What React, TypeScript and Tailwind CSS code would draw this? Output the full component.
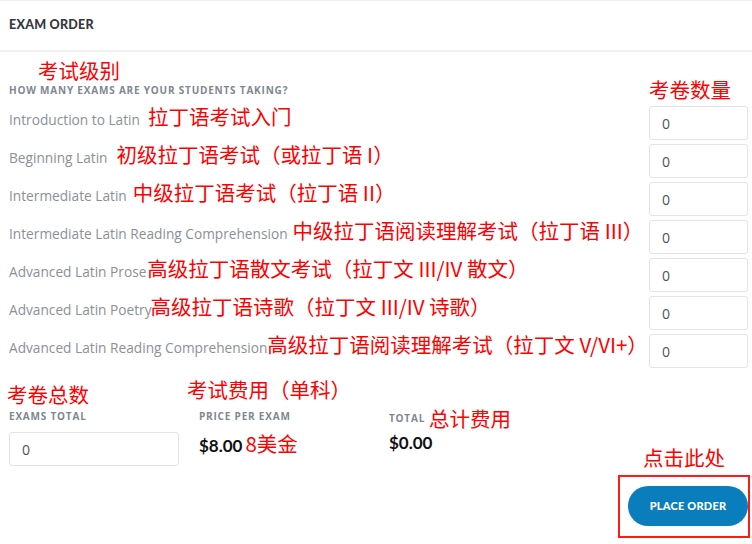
const rows = [
  { label: "Introduction to Latin", note: "拉丁语考试入门", gap: "ml-[8px]" },
  { label: "Beginning Latin", note: "初级拉丁语考试（或拉丁语 I）", gap: "ml-[9px]" },
  { label: "Intermediate Latin", note: "中级拉丁语考试（拉丁语 II）", gap: "ml-[6px]" },
  { label: "Intermediate Latin Reading Comprehension", note: "中级拉丁语阅读理解考试（拉丁语 III）", gap: "ml-[5px]" },
  { label: "Advanced Latin Prose", note: "高级拉丁语散文考试（拉丁文 III/IV 散文）", gap: "ml-[1px]" },
  { label: "Advanced Latin Poetry", note: "高级拉丁语诗歌（拉丁文 III/IV 诗歌）", gap: "-ml-[1px]" },
  { label: "Advanced Latin Reading Comprehension", note: "高级拉丁语阅读理解考试（拉丁文 V/VI+）", gap: "ml-0" },
];

const note = "text-[#ff0000] text-[20.5px] leading-[24px] font-['Noto_Sans_CJK_SC',sans-serif] whitespace-nowrap";
const cap = "text-[10px] leading-[14px] font-bold tracking-[0.08em] text-[#7f8791] uppercase font-['Open_Sans',sans-serif]";

const App = () => {
  return (
    <div className="w-[752px] h-[544px] bg-white border-t border-[#eeeeee] overflow-hidden font-['Open_Sans',sans-serif]">
      <header className="h-[51px] flex items-center px-[9px] border-b-2 border-[#f2f2f2]">
        <h1 className="text-[12.5px] font-black tracking-[0.02em] text-[#33383d] font-['Lato',sans-serif]">EXAM ORDER</h1>
      </header>

      <main className="pl-[9px] pr-[4px] pt-[6px]">
        <div className="flex justify-between">
          <div>
            <div className={`${note} pl-[29px]`}>考试级别</div>
            <div className={`${cap} mt-[1px]`}>How many exams are your students taking?</div>
          </div>
          <div className="pt-[19px] w-[99px]">
            <div className={note}>考卷数量</div>
          </div>
        </div>

        <div className="mt-[5px] flex flex-col gap-[4px]">
          {rows.map((r) => (
            <div key={r.label} className="flex items-center justify-between h-[34px]">
              <div className="flex items-baseline pb-[12px] relative z-10">
                <span className="text-[13.7px] text-[#8b9098] whitespace-nowrap">{r.label}</span>
                <span className={`${note} ${r.gap}`}>{r.note}</span>
              </div>
              <input
                readOnly
                value="0"
                className="w-[99px] h-[34px] shrink-0 border border-[#e3e3e3] rounded-[3px] px-[12px] text-[14px] text-[#4a5560] bg-transparent outline-none"
              />
            </div>
          ))}
        </div>

        <div className="flex">
          <div className="grid grid-cols-[190px_190px_190px]">
            <div className="flex flex-col pt-[14px]">
              <div className={`${note} -ml-[2px]`}>考卷总数</div>
              <div className={`${cap} mt-[3px]`}>Exams Total</div>
              <input
                readOnly
                value="0"
                className="mt-[9px] w-[170px] h-[34px] border border-[#e3e3e3] rounded-[3px] px-[12px] text-[14px] text-[#4a5560] outline-none"
              />
            </div>
            <div className="flex flex-col pt-[9px]">
              <div className={`${note} -ml-[12px]`}>考试费用（单科）</div>
              <div className={`${cap} mt-[8px]`}>Price Per Exam</div>
              <div className="mt-[8px] flex items-baseline gap-[3px]">
                <span className="text-[17px] font-bold text-[#111111] font-['Lato',sans-serif]">$8.00</span>
                <span className={note}>8美金</span>
              </div>
            </div>
            <div className="flex flex-col pt-[38px]">
              <div className="flex items-center gap-[4px] h-[24px]">
                <span className={cap}>Total</span>
                <span className={note}>总计费用</span>
              </div>
              <div className="mt-[1px] h-[24px] flex items-center">
                <span className="text-[17px] font-bold text-[#111111] font-['Lato',sans-serif]">$0.00</span>
              </div>
            </div>
          </div>

          <div className="ml-auto mr-[-2px] mt-[77px] flex flex-col items-center w-[132px]">
            <div className={`${note} mb-[6px]`}>点击此处</div>
            <div className="w-[132px] h-[63px] border-2 border-[#ff1a1a] pl-[8px] pt-[9px]">
              <button className="w-[120px] h-[40px] rounded-full bg-[#0a7dbd] text-white text-[11px] font-black tracking-[0.02em] font-['Lato',sans-serif]">
                PLACE ORDER
              </button>
            </div>
          </div>
        </div>
      </main>
    </div>
  );
};

export default App;
